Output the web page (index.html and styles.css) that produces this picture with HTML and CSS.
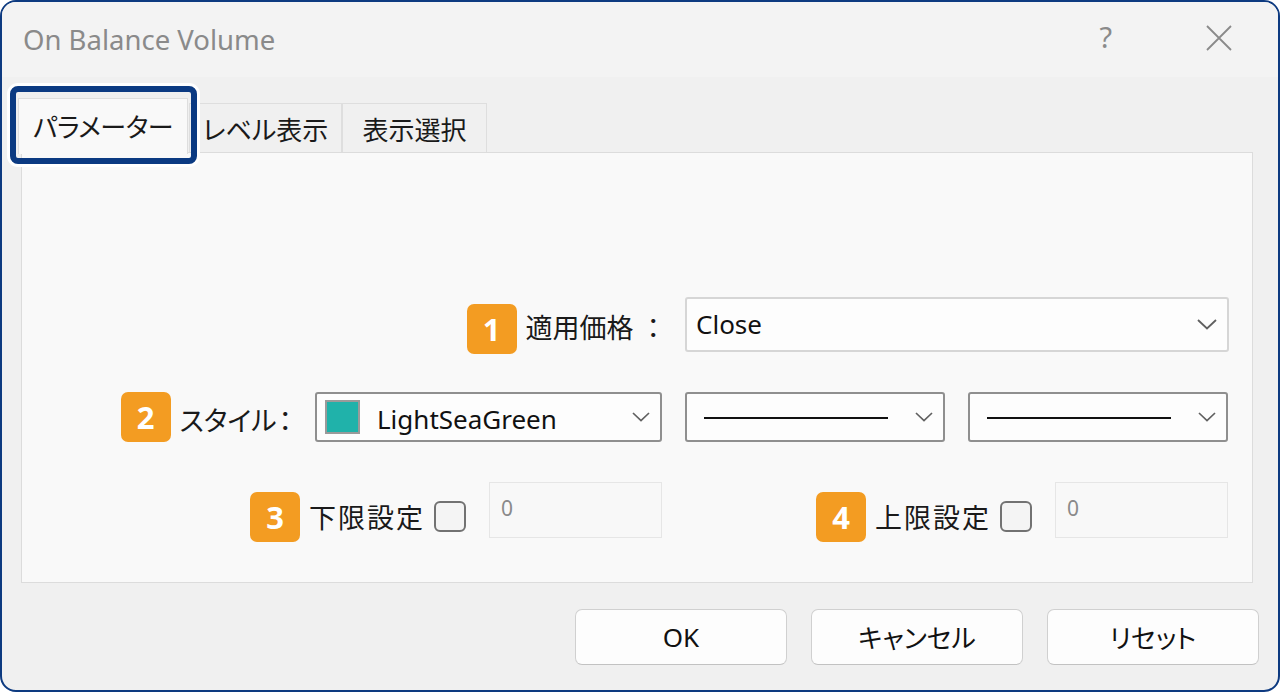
FILE: index.html
```html
<!DOCTYPE html>
<html lang="ja">
<head>
<meta charset="utf-8">
<title>On Balance Volume</title>
<link rel="stylesheet" href="styles.css">
</head>
<body>
<div class="dialog">
  <div class="titlebar">
    <span class="title">On Balance Volume</span>
    <div class="tb-btns">
      <span class="help">?</span>
      <svg class="close-x" width="28" height="28" viewBox="0 0 28 28"><path d="M2 2 L26 26 M26 2 L2 26" stroke="#8a8a8a" stroke-width="1.8" fill="none"/></svg>
    </div>
  </div>
  <div class="body">
    <div class="tabs">
      <div class="tab active">パラメーター</div>
      <div class="tab t2">レベル表示</div>
      <div class="tab t3">表示選択</div>
    </div>
    <div class="panel">
      <div class="grid">
        <div class="cell c12 r1">
          <span class="badge b1">1</span>
          <span class="label">適用価格<span class="colon wide">：</span></span>
        </div>
        <div class="select light c34 r1">
          <span class="sel-text">Close</span>
          <svg class="chev" width="20" height="11" viewBox="0 0 20 11"><path d="M1 1 L10 9.5 L19 1" stroke="#606060" stroke-width="1.8" fill="none"/></svg>
        </div>

        <div class="cell c1 r2">
          <span class="badge">2</span>
          <span class="label">スタイル<span class="colon">：</span></span>
        </div>
        <div class="select dark c2 r2">
          <span class="swatch"></span>
          <span class="sel-text">LightSeaGreen</span>
          <svg class="chev" width="18" height="10" viewBox="0 0 18 10"><path d="M1 1 L9 8.5 L17 1" stroke="#606060" stroke-width="1.7" fill="none"/></svg>
        </div>
        <div class="select dark c3 r2">
          <span class="line"></span>
          <svg class="chev" width="18" height="10" viewBox="0 0 18 10"><path d="M1 1 L9 8.5 L17 1" stroke="#606060" stroke-width="1.7" fill="none"/></svg>
        </div>
        <div class="select dark c4 r2">
          <span class="line"></span>
          <svg class="chev" width="18" height="10" viewBox="0 0 18 10"><path d="M1 1 L9 8.5 L17 1" stroke="#606060" stroke-width="1.7" fill="none"/></svg>
        </div>

        <div class="cell c12 r3">
          <span class="badge b3">3</span>
          <span class="label l3">下限設定</span>
          <span class="checkbox"></span>
          <span class="input">0</span>
        </div>
        <div class="cell c34 r3">
          <span class="badge b3">4</span>
          <span class="label l3">上限設定</span>
          <span class="checkbox"></span>
          <span class="input">0</span>
        </div>
      </div>
    </div>
    <div class="buttons">
      <div class="btn">OK</div>
      <div class="btn">キャンセル</div>
      <div class="btn">リセット</div>
    </div>
  </div>
  <div class="tab-highlight"></div>
</div>
</body>
</html>
```

FILE: styles.css
```css
* { box-sizing: border-box; }
html, body {
  margin: 0;
  padding: 0;
  background: #ffffff;
}
body {
  width: 1280px;
  height: 692px;
  overflow: hidden;
  font-family: "Noto Sans", "Noto Sans CJK JP", sans-serif;
  color: #1a1a1a;
}
.dialog {
  position: relative;
  width: 1280px;
  height: 692px;
  border: 2px solid #0d3a80;
  border-radius: 16px;
  overflow: hidden;
  background: #f0f0f0;
  display: flex;
  flex-direction: column;
}
.titlebar {
  height: 75px;
  background: #f3f3f3;
  display: flex;
  align-items: center;
  padding-left: 21px;
  flex-shrink: 0;
}
.title {
  font-size: 27.5px;
  color: #8a8a8a;
  margin-top: -1px;
}
.tb-btns {
  margin-left: auto;
  display: flex;
  align-items: center;
  margin-right: 45px;
  margin-top: -6px;
}
.help {
  font-size: 29px;
  color: #8a8a8a;
  margin-right: 93px;
}
.close-x { display: block; margin-top: 2px; }

.body {
  flex: 1;
  padding: 0 25px 0 19px;
  display: flex;
  flex-direction: column;
}
.tabs {
  display: flex;
  align-items: flex-end;
  margin-top: 21px;
  height: 54px;
  position: relative;
  z-index: 2;
  font-family: "Noto Sans CJK JP", sans-serif;
  font-feature-settings: "palt";
  font-size: 26px;
}
.tab {
  height: 49px;
  display: flex;
  align-items: center;
  justify-content: center;
  border: 1px solid #dedede;
  border-bottom: none;
  background: #f0f0f0;
  color: #1a1a1a;
}
.tab.active {
  height: 56px;
  width: 170px;
  margin-left: -3px;
  margin-bottom: -2px;
  background: #f9f9f9;
  padding-bottom: 2px;
  letter-spacing: -0.5px;
}
.tab.t2 { width: 153px; margin-left: 1px; }
.tab.t3 { width: 145px; margin-left: 0; }

.panel {
  height: 431px;
  border: 1px solid #dcdcdc;
  background: #f9f9f9;
  padding: 144px 24px 0 0;
}
.grid {
  display: grid;
  grid-template-columns: 1fr 347px 260px 260px;
  grid-template-rows: 55px 50px 56px;
  column-gap: 23px;
  row-gap: 40px;
}
.c12 { grid-column: 1 / 3; }
.c34 { grid-column: 3 / 5; }
.c1 { grid-column: 1; }
.c2 { grid-column: 2; }
.c3 { grid-column: 3; }
.c4 { grid-column: 4; }
.r1 { grid-row: 1; }
.r2 { grid-row: 2; }
.r3 { grid-row: 3; }

.cell {
  display: flex;
  align-items: center;
  justify-content: flex-end;
}
.badge {
  width: 50px;
  height: 50px;
  border-radius: 7px;
  background: #f39c22;
  color: #ffffff;
  font-family: "Noto Sans", sans-serif;
  font-weight: 700;
  font-size: 31px;
  display: flex;
  align-items: center;
  justify-content: center;
  flex-shrink: 0;
}
.badge.b1 { margin-top: 8px; }
.badge.b3 { margin-top: 14px; }
.label {
  font-family: "Noto Sans CJK JP", sans-serif;
  font-feature-settings: "palt";
  font-size: 27px;
  margin-left: 9px;
  margin-top: 4px;
  white-space: nowrap;
}
.colon { margin-left: 2px; }
.colon.wide { margin-left: 13px; margin-right: 2px; }
.label.l3 { margin-top: 12px; letter-spacing: 2px; }

.select {
  display: flex;
  align-items: center;
  background: #fdfdfd;
  border-radius: 3px;
  position: relative;
}
.select.light {
  border: 2px solid #d6d6d6;
  padding-left: 9px;
  margin-right: -1px;
}
.select.dark {
  border: 2px solid #8f8f8f;
  padding-left: 8px;
}
.sel-text {
  font-size: 26px;
  color: #111;
  margin-top: -2px;
}
.chev {
  margin-left: auto;
  margin-right: 10px;
  display: block;
}
.swatch {
  width: 35px;
  height: 34px;
  background: #20b2aa;
  border: 2px solid #9a9a9a;
  margin-right: 17px;
}
.select.dark .sel-text { margin-top: 4px; }
.line {
  width: 184px;
  height: 2px;
  background: #111;
  margin-left: 9px;
  margin-top: 1px;
}
.checkbox {
  width: 32px;
  height: 31px;
  border: 2px solid #727272;
  border-radius: 6px;
  background: #f4f4f4;
  margin-left: 9px;
  margin-top: 12px;
  flex-shrink: 0;
}
.input {
  width: 173px;
  height: 56px;
  margin-left: 23px;
  border: 1px solid #e6e6e6;
  background: #f8f8f8;
  color: #8a8a8a;
  font-size: 21px;
  padding: 11px 0 0 11px;
  flex-shrink: 0;
}
.buttons {
  display: flex;
  justify-content: flex-end;
  gap: 24px;
  margin-top: 26px;
  margin-right: -6px;
}
.btn {
  width: 212px;
  height: 56px;
  border: 1px solid #d0d0d0;
  border-bottom-color: #c2c2c2;
  border-radius: 7px;
  background: #fdfdfd;
  display: flex;
  align-items: center;
  justify-content: center;
  font-family: "Noto Sans", "Noto Sans CJK JP", sans-serif;
  font-feature-settings: "palt";
  font-size: 26px;
  color: #111;
}
.tab-highlight {
  position: absolute;
  left: 8px;
  top: 84px;
  width: 187px;
  height: 78px;
  border: 6px solid #0b3a82;
  border-radius: 8px;
  box-shadow: 0 0 0 3px #ffffff;
  z-index: 5;
  pointer-events: none;
}
```
